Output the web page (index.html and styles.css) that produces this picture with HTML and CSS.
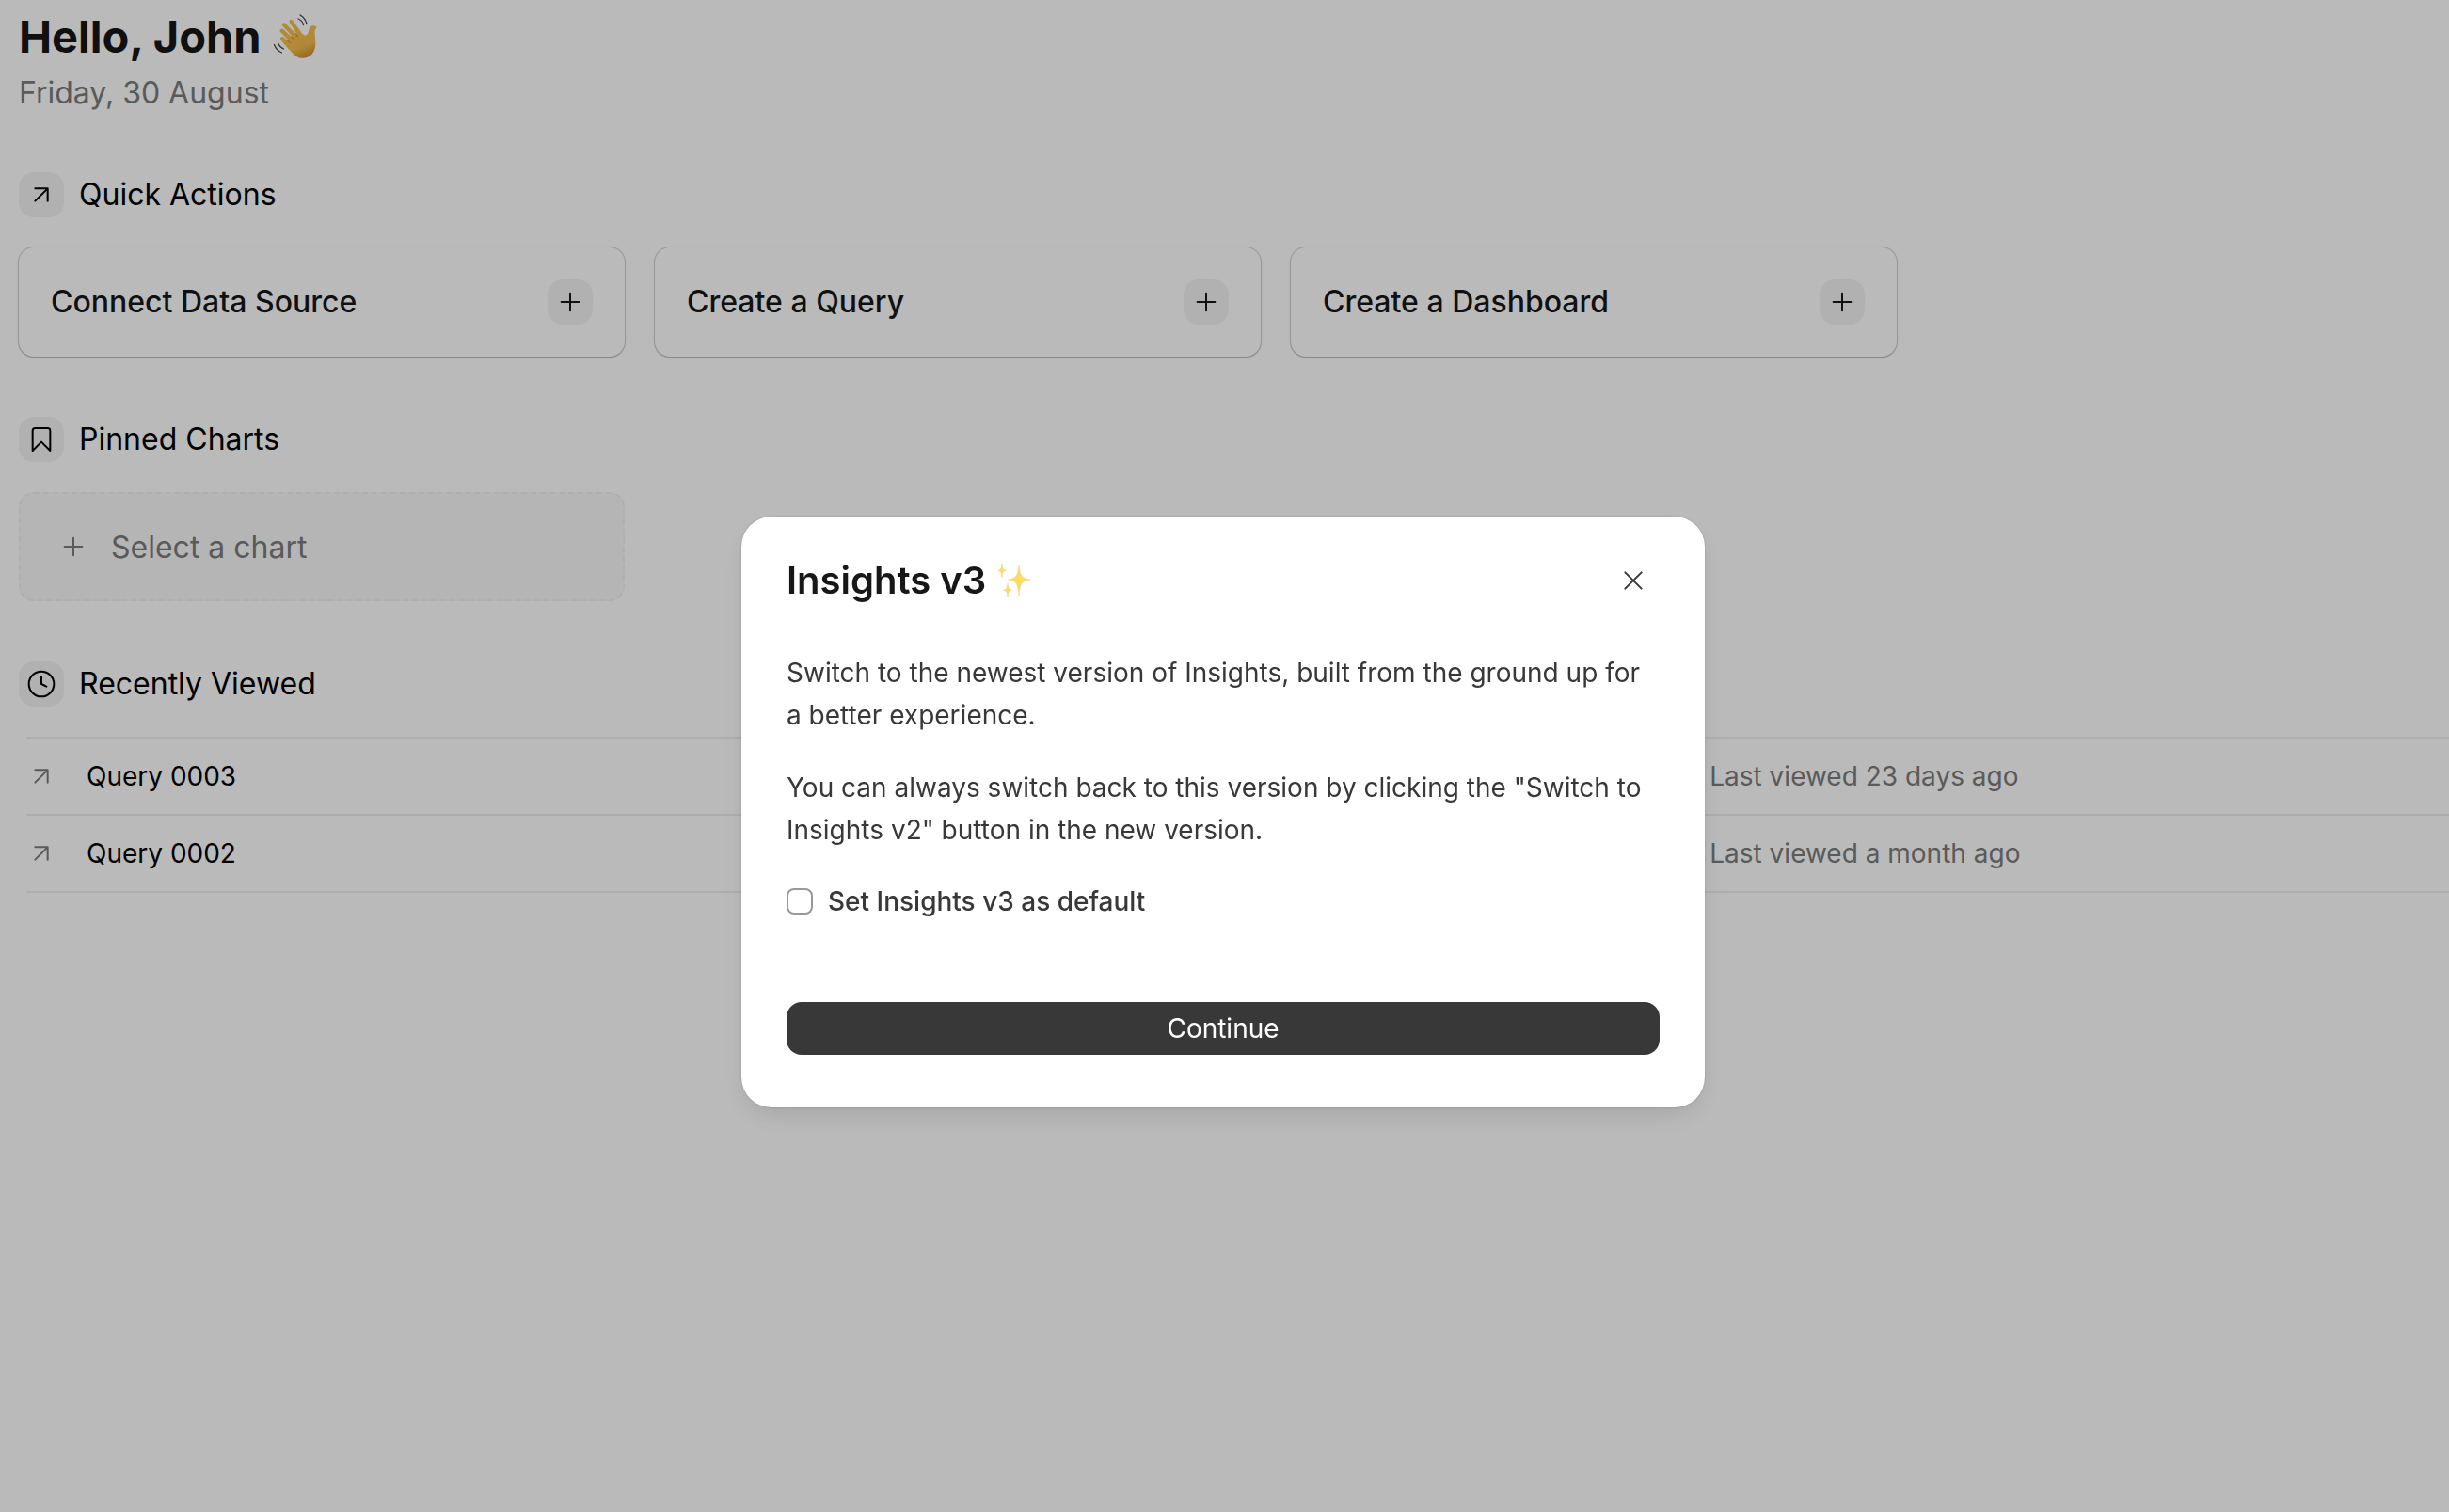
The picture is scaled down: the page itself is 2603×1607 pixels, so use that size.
FILE: index.html
```html
<!DOCTYPE html>
<html lang="en">
<head>
<meta charset="utf-8">
<title>Insights</title>
<link rel="stylesheet" href="styles.css">
</head>
<body>
<svg class="sprite" aria-hidden="true">
  <symbol id="arrow" viewBox="0 0 24 24"><path d="M7 7h10v10M7 17 17 7"/></symbol>
  <symbol id="plus" viewBox="0 0 24 24"><path d="M5 12h14M12 5v14"/></symbol>
  <symbol id="bookmark" viewBox="0 0 24 24"><path d="m19 21-7-7-7 7V5a2 2 0 0 1 2-2h10a2 2 0 0 1 2 2v16z"/></symbol>
  <symbol id="clock" viewBox="0 0 24 24"><circle cx="12" cy="12" r="10"/><path d="M12 6v6l4 2"/></symbol>
  <symbol id="close" viewBox="0 0 24 24"><path d="M5.500 5.500l13 13M18.500 5.500l-13 13"/></symbol>
</svg>
<main class="home">
  <header class="greeting">
    <h1 class="greeting-title">Hello, John
      <svg class="wave" viewBox="0 0 48 48" role="img" aria-label="waving hand">
        <defs>
          <linearGradient id="skin" x1="0.3" y1="0" x2="0.7" y2="1">
            <stop offset="0" stop-color="#f5c04f"/><stop offset="0.7" stop-color="#f3bc4b"/><stop offset="1" stop-color="#d08e2c"/>
          </linearGradient>
        </defs>
        <path fill="url(#skin)" d="M8.600 27.500c-1.800-1.900.8-4.700 2.900-2.900l4 3.400.6-.7-8-8.200c-1.900-2.100 1-5 3.100-3l8.400 8 .7-.7-9.900-10.700c-1.900-2.200 1.100-4.800 3.100-2.700L24 20.500l.8-.6-7-11c-1.500-2.600 1.700-4.400 3.400-2.100l9.600 13.400c1.200 1.500 2.600 2.300 4.200 2.300 1.500-.3 2.200-1.700 2.800-3.700.8-3 1.200-5.300 3.500-6.200 2-.9 5 .4 5.100 1.400.2.900-1.500 1.500-1.700 3.300-.3 3.200.2 7.200.5 10.700.6 6-.5 11.100-3.600 14.400-4.700 5-12.500 5.800-17.600 1.800-3.200-2.500-8.200-8.100-12.600-12.900z"/>
        <path class="wave-crease" d="m15.500 28 3.100 2.600M19.500 24l3.500 3.100M24 20.500l2.600 3.300"/>
        <path class="wave-motion" d="M27 5c3 1.200 4.800 3.200 5.500 6.500M29 1c3.500 2 6 5.200 7 9.500M5.500 31c1.200 3 3 4.800 6 6M1.500 32.500c1.500 4.200 4 6.800 8 8.500"/>
      </svg>
    </h1>
    <p class="greeting-date">Friday, 30 August</p>
  </header>

  <section class="section">
    <h2 class="section-title"><span class="tile"><svg class="icon"><use href="#arrow"/></svg></span>Quick Actions</h2>
    <div class="cards">
      <button class="card" type="button">Connect Data Source<span class="tile"><svg class="icon"><use href="#plus"/></svg></span></button>
      <button class="card" type="button">Create a Query<span class="tile"><svg class="icon"><use href="#plus"/></svg></span></button>
      <button class="card" type="button">Create a Dashboard<span class="tile"><svg class="icon"><use href="#plus"/></svg></span></button>
    </div>
  </section>

  <section class="section">
    <h2 class="section-title"><span class="tile"><svg class="icon"><use href="#bookmark"/></svg></span>Pinned Charts</h2>
    <div class="cards">
      <button class="select-chart" type="button"><svg class="icon"><use href="#plus"/></svg>Select a chart</button>
    </div>
  </section>

  <section class="section">
    <h2 class="section-title"><span class="tile"><svg class="icon"><use href="#clock"/></svg></span>Recently Viewed</h2>
    <div class="recent">
      <table class="recent-table">
        <colgroup><col class="col-icon"><col class="col-name"><col></colgroup>
        <tbody>
          <tr><td><svg class="icon"><use href="#arrow"/></svg></td><td><a class="recent-link" href="#query-0003">Query 0003</a></td><td>Last viewed 23 days ago</td></tr>
          <tr><td><svg class="icon"><use href="#arrow"/></svg></td><td><a class="recent-link" href="#query-0002">Query 0002</a></td><td>Last viewed a month ago</td></tr>
        </tbody>
      </table>
    </div>
  </section>
</main>

<div class="overlay">
  <div class="dialog" role="dialog" aria-modal="true" aria-labelledby="dialog-title">
    <div class="dialog-header">
      <h3 class="dialog-title" id="dialog-title">Insights v3
        <svg class="sparkles" viewBox="0 0 36 36" role="img" aria-label="sparkles">
          <path d="M23 1c1 11 2.400 14.800 12 16-9.600 1.200-11 5-12 17-1-12-2.400-15.800-11.500-17C20.600 15.800 22 12 23 1z"/>
          <path d="M5 0c.5 4.800 1 6.600 4.500 7.300C6 8 5.500 9.800 5 14.600 4.500 9.800 4 8 .5 7.300 4 6.600 4.500 4.800 5 0z"/>
          <path d="M11 21c.5 4.700 1 6.500 4.500 7.200-3.500.7-4 2.500-4.500 7.300-.5-4.800-1-6.600-4.500-7.300 3.500-.7 4-2.500 4.500-7.200z"/>
        </svg>
      </h3>
      <button class="close" type="button" aria-label="Close"><svg class="icon"><use href="#close"/></svg></button>
    </div>
    <div class="dialog-body">
      <p>Switch to the newest version of Insights, built from the ground up for a better experience.</p>
      <p>You can always switch back to this version by clicking the "Switch to Insights v2" button in the new version.</p>
    </div>
    <div class="default-row">
      <input class="checkbox" type="checkbox" id="set-default">
      <label for="set-default">Set Insights v3 as default</label>
    </div>
    <button class="continue" type="button">Continue</button>
  </div>
</div>
</body>
</html>
```
FILE: styles.css
```css
* {
  box-sizing: border-box;
}

body {
  margin: 0;
  background: #fff;
  color: #000;
  font-family: Inter, "Liberation Sans", sans-serif;
  font-size: 28px;
  font-optical-sizing: none;
}

h1, h2, h3, p {
  margin: 0;
}

button {
  border: 0;
  font: inherit;
  cursor: pointer;
}

.sprite {
  display: none;
}

.icon {
  display: block;
  flex: none;
  width: 32px;
  height: 32px;
  fill: none;
  stroke: currentColor;
  stroke-width: 1.5;
  stroke-linecap: round;
  stroke-linejoin: round;
}

.tile {
  display: grid;
  place-items: center;
  flex: none;
  width: 48px;
  height: 48px;
  border-radius: 16px;
  background: #f3f3f3;
}

/* Home page */
.home {
  display: flex;
  flex-direction: column;
  gap: 64px;
  padding: 11px 0 64px 20px;
}

.greeting {
  display: flex;
  flex-direction: column;
  gap: 12px;
}

.greeting-title {
  display: flex;
  align-items: center;
  gap: 12px;
  font-size: 47px;
  line-height: 56px;
  font-weight: 700;
  color: #171717;
}

.wave {
  width: 48px;
  height: 48px;
}

.wave-crease,
.wave-motion {
  fill: none;
  stroke: #c58a2e;
  stroke-linecap: round;
}

.wave-motion {
  stroke: #454b50;
  stroke-width: 1.3;
}

.greeting-date {
  font-size: 32px;
  line-height: 40px;
  color: #7c7c7c;
}

.section {
  display: flex;
  flex-direction: column;
  gap: 32px;
}

.section-title {
  display: flex;
  align-items: center;
  gap: 16px;
  font-size: 32px;
  line-height: 40px;
  font-weight: 400;
}

.cards {
  display: grid;
  grid-template-columns: repeat(3, minmax(0, 644px));
  gap: 32px;
}

.card {
  display: flex;
  align-items: center;
  justify-content: space-between;
  padding: 34px;
  border-radius: 16px;
  background: #fff;
  box-shadow: 0 0 1px 1px rgba(0, 0, 0, 0.16), 0 1px 2px rgba(0, 0, 0, 0.2);
  font-size: 32px;
  line-height: 40px;
  font-weight: 500;
  color: #171717;
}

.select-chart {
  display: flex;
  align-items: center;
  gap: 24px;
  height: 116px;
  padding: 0 40px;
  border: 2px dashed #f0f0f0;
  border-radius: 16px;
  background: #f8f8f8;
  font-size: 32px;
  color: #7c7c7c;
}

.recent {
  padding-left: 8px;
}

.recent-table {
  width: 100%;
  table-layout: fixed;
  border-collapse: collapse;
  border-top: 2px solid #ededed;
  color: #7c7c7c;
}

.recent-table tr {
  border-bottom: 2px solid #ededed;
}

.recent-table td {
  height: 82px;
  padding: 0;
}

.col-icon {
  width: 64px;
}

.col-name {
  width: 67%;
}

.recent-link {
  color: #000;
  text-decoration: none;
}

/* Dialog */
.overlay {
  position: fixed;
  inset: 0;
  display: flex;
  align-items: flex-start;
  justify-content: center;
  padding: 549px 3px 0 0;
  background: rgba(0, 0, 0, 0.27);
}

.dialog {
  width: 1024px;
  padding: 40px 48px 56px;
  border-radius: 32px;
  background: #fff;
  box-shadow: 0 0 2px rgba(0, 0, 0, 0.25), 0 12px 32px -8px rgba(0, 0, 0, 0.14);
  color: #383838;
}

.dialog-header {
  display: flex;
  align-items: center;
  justify-content: space-between;
}

.dialog-title {
  display: flex;
  align-items: center;
  gap: 12px;
  font-size: 40px;
  line-height: 56px;
  font-weight: 600;
  color: #171717;
}

.sparkles {
  width: 36px;
  height: 36px;
  fill: #fbdc62;
  stroke: #f6cf8a;
  stroke-width: 0.6;
}

.close {
  display: grid;
  place-items: center;
  width: 56px;
  height: 56px;
  padding: 0;
  background: none;
  color: #383838;
}

.dialog-body {
  display: flex;
  flex-direction: column;
  gap: 32px;
  padding-top: 48px;
  line-height: 45px;
}

.default-row {
  display: flex;
  align-items: center;
  gap: 16px;
  margin: 35px 0 89px;
  line-height: 36px;
  font-weight: 500;
}

.checkbox {
  appearance: none;
  width: 28px;
  height: 28px;
  margin: 0;
  border: 2px solid #999;
  border-radius: 8px;
  background: #fff;
}

.continue {
  width: 100%;
  height: 56px;
  border-radius: 16px;
  background: #383838;
  color: #fff;
}
```
